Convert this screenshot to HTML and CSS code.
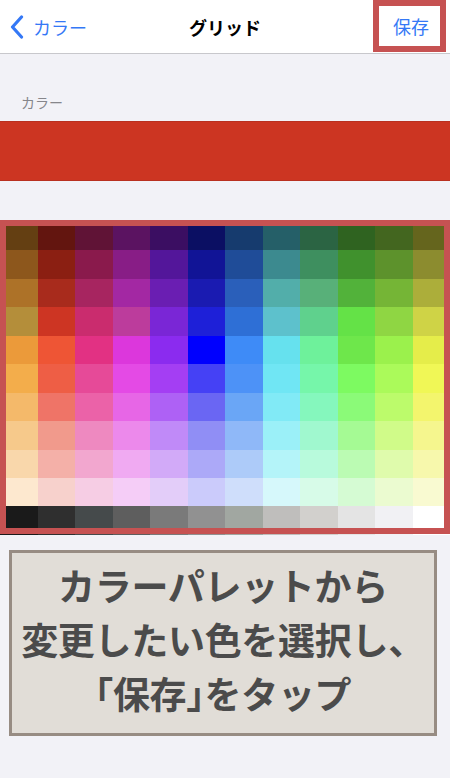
FILE: index.html
```html
<!DOCTYPE html>
<html lang="ja">
<head>
<meta charset="utf-8">
<title>グリッド</title>
<link rel="stylesheet" href="styles.css">
</head>
<body>
<header class="nav">
  <div class="nav-back">
    <svg class="chev" width="14" height="24" viewBox="0 0 14 24"><path d="M11.5 2 L2.5 12 L11.5 22" fill="none" stroke="#3478f6" stroke-width="3.2" stroke-linecap="round" stroke-linejoin="round"/></svg>
    <span>カラー</span>
  </div>
  <div class="nav-title">グリッド</div>
  <div class="nav-right"><div class="save">保存</div></div>
</header>

<div class="label">カラー</div>
<div class="swatch"></div>

<div class="palette">
  <div class="grid">
    <div style="background:#643f12"></div><div style="background:#63150f"></div><div style="background:#601336"></div><div style="background:#5b1361"></div><div style="background:#3b0e62"></div><div style="background:#0b0f63"></div><div style="background:#163b6e"></div><div style="background:#255f68"></div><div style="background:#2b6443"></div><div style="background:#2f6320"></div><div style="background:#43661f"></div><div style="background:#65651d"></div>
    <div style="background:#8d571c"></div><div style="background:#8b1f12"></div><div style="background:#8a1a4c"></div><div style="background:#881d86"></div><div style="background:#53169a"></div><div style="background:#111496"></div><div style="background:#1f4c98"></div><div style="background:#3c8a8f"></div><div style="background:#3e8f5f"></div><div style="background:#40912d"></div><div style="background:#5d922c"></div><div style="background:#8c8c2f"></div>
    <div style="background:#ad7228"></div><div style="background:#a82b1c"></div><div style="background:#a72560"></div><div style="background:#a328a3"></div><div style="background:#6a1eb2"></div><div style="background:#1a1bb1"></div><div style="background:#2a5fba"></div><div style="background:#52aeaa"></div><div style="background:#58b079"></div><div style="background:#52b23a"></div><div style="background:#75b536"></div><div style="background:#acae3a"></div>
    <div style="background:#b48e3a"></div><div style="background:#cd3523"></div><div style="background:#ca2c6e"></div><div style="background:#bc3c9c"></div><div style="background:#7a26d6"></div><div style="background:#1e20d8"></div><div style="background:#2e6fd6"></div><div style="background:#5dc1cc"></div><div style="background:#5fd18d"></div><div style="background:#64e247"></div><div style="background:#8fd643"></div><div style="background:#cfd346"></div>
    <div style="background:#eb9a3a"></div><div style="background:#ee5535"></div><div style="background:#e23183"></div><div style="background:#dc37dc"></div><div style="background:#8b2bef"></div><div style="background:#0000fe"></div><div style="background:#3e8bf7"></div><div style="background:#66e1ee"></div><div style="background:#6ef19b"></div><div style="background:#6ee74b"></div><div style="background:#9bf14c"></div><div style="background:#e5ed4a"></div>
    <div style="background:#f3ad4b"></div><div style="background:#ee5e45"></div><div style="background:#e64a98"></div><div style="background:#e44ae5"></div><div style="background:#a43ef3"></div><div style="background:#4541f5"></div><div style="background:#4d92f7"></div><div style="background:#70e6f4"></div><div style="background:#76f6aa"></div><div style="background:#7dfa61"></div><div style="background:#abfa5a"></div><div style="background:#f0f756"></div>
    <div style="background:#f4b96a"></div><div style="background:#ef7467"></div><div style="background:#eb62a8"></div><div style="background:#e766e6"></div><div style="background:#ae61f5"></div><div style="background:#6a66f3"></div><div style="background:#6aa6f6"></div><div style="background:#81eaf6"></div><div style="background:#85f7bd"></div><div style="background:#8bfa78"></div><div style="background:#bcfb6b"></div><div style="background:#f3f56d"></div>
    <div style="background:#f6c98b"></div><div style="background:#f19a8c"></div><div style="background:#ee89c0"></div><div style="background:#ec89eb"></div><div style="background:#c08af8"></div><div style="background:#908ef5"></div><div style="background:#8fb8f8"></div><div style="background:#9bf0f8"></div><div style="background:#a0f8cf"></div><div style="background:#a5fa94"></div><div style="background:#d0fb89"></div><div style="background:#f5f68e"></div>
    <div style="background:#f9d7ab"></div><div style="background:#f4b0a8"></div><div style="background:#f2a7cf"></div><div style="background:#f0aaf2"></div><div style="background:#d2aaf8"></div><div style="background:#aca9f8"></div><div style="background:#adcbf9"></div><div style="background:#b4f4f9"></div><div style="background:#b8fadc"></div><div style="background:#bbfbb3"></div><div style="background:#dffbac"></div><div style="background:#f7f8ac"></div>
    <div style="background:#fde8cf"></div><div style="background:#f7d1cc"></div><div style="background:#f6cde4"></div><div style="background:#f5cdf7"></div><div style="background:#e3cdf9"></div><div style="background:#cbcbfb"></div><div style="background:#cfdefb"></div><div style="background:#d6f8fb"></div><div style="background:#d7fbe8"></div><div style="background:#d5fbd3"></div><div style="background:#ebfbd0"></div><div style="background:#f9fad1"></div>
    <div style="background:#1a1a1a"></div><div style="background:#2f2f2f"></div><div style="background:#454a4b"></div><div style="background:#5e5e5e"></div><div style="background:#7a7a7a"></div><div style="background:#919191"></div><div style="background:#a1a7a1"></div><div style="background:#bfbebc"></div><div style="background:#d2d0cd"></div><div style="background:#e4e4e4"></div><div style="background:#f1f1f4"></div><div style="background:#ffffff"></div>
  </div>
  <div class="highlight"></div>
</div>

<div class="caption">
  <p>カラーパレットから<br>変更したい色を選択し、<br><span class="half">「</span>保存<span class="half">」</span>をタップ</p>
</div>
</body>
</html>
```

FILE: styles.css
```css
* { box-sizing: border-box; }
html, body { margin: 0; padding: 0; }
body {
  width: 450px;
  min-height: 778px;
  background: #f2f2f7;
  font-family: "Noto Sans CJK JP", "Noto Sans", sans-serif;
  overflow: hidden;
}

.nav {
  height: 54px;
  background: #ffffff;
  border-bottom: 1px solid #c8c8cc;
  display: grid;
  grid-template-columns: 1fr auto 1fr;
  align-items: center;
}
.nav-back {
  display: flex;
  align-items: center;
  gap: 9px;
  padding-left: 10px;
  color: #3478f6;
  font-size: 18px;
}
.chev { display: block; }
.nav-title {
  font-size: 18px;
  font-weight: 700;
  color: #000;
}
.nav-right {
  display: flex;
  justify-content: flex-end;
  align-self: start;
  padding-right: 4px;
}
.save {
  width: 73px;
  height: 52px;
  border: 6px solid #c65252;
  background: #fff;
  color: #3478f6;
  font-size: 18px;
  display: flex;
  align-items: center;
  justify-content: center;
  padding-left: 3px;
}

.label {
  padding: 38px 21px 0;
  height: 67px;
  font-size: 14px;
  line-height: 20px;
  color: #86868b;
}

.swatch {
  height: 60px;
  background: #cc3522;
  border-top: 1px solid #b93020;
  border-bottom: 1px solid #b93020;
}

.palette {
  position: relative;
  margin-top: 41px;
}
.grid {
  display: grid;
  grid-template-columns: repeat(12, 1fr);
  grid-template-rows: repeat(11, 28.45px);
}
.highlight {
  position: absolute;
  top: -2px;
  left: 0;
  right: 0;
  height: 314px;
  border: 6px solid #c65252;
}

.caption {
  margin: 15px 0 0 9px;
  width: 428px;
  height: 186px;
  border: 3px solid #978c83;
  background: #e1ddd7;
  padding-top: 5px;
}
.caption p {
  margin: 0;
  text-align: center;
  font-size: 37px;
  line-height: 54px;
  font-weight: 700;
  color: #4b4b4b;
  letter-spacing: -0.3px;
}
.caption .half {
  font-feature-settings: "halt";
}
```
